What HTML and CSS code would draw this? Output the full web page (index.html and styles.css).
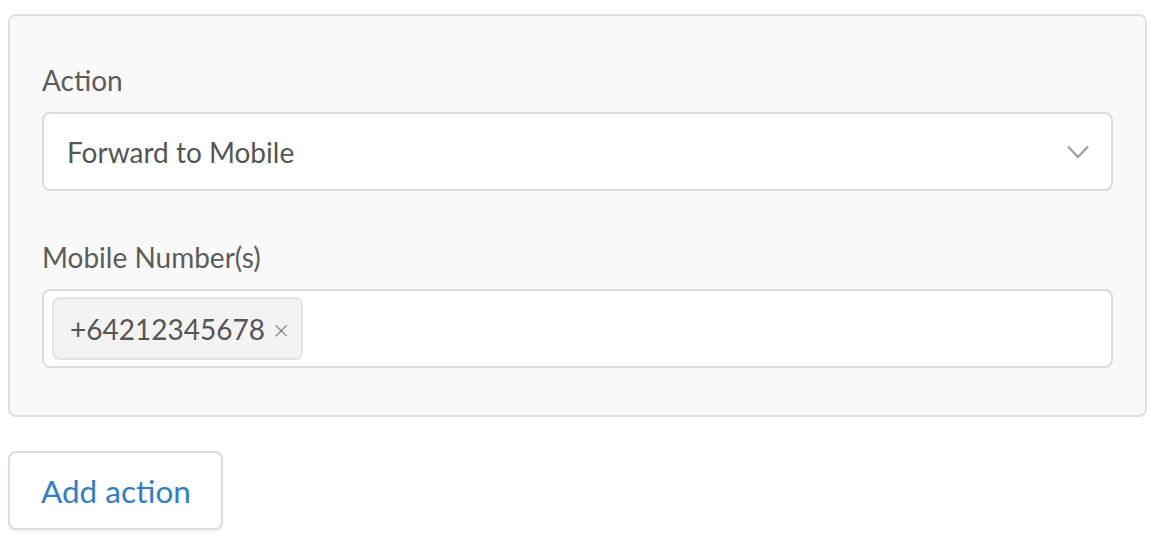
FILE: index.html
```html
<!DOCTYPE html>
<html lang="en">
<head>
  <meta charset="UTF-8" />
  <meta name="viewport" content="width=device-width, initial-scale=1" />
  <title>Actions</title>
  <link rel="stylesheet" href="styles.css">
</head>
<body>
  <div class="actions">
    <div class="action-panel">
      <div class="field">
        <label class="field-label">Action</label>
        <div class="select">
          <span>Forward to Mobile</span>
          <svg class="chevron" width="22" height="14" viewBox="0 0 22 14" aria-hidden="true">
            <path d="M1 1.5 L11 12 L21 1.5" fill="none" stroke="#9a9a9a" stroke-width="2"/>
          </svg>
        </div>
      </div>
      <div class="field">
        <label class="field-label">Mobile Number(s)</label>
        <div class="tag-input">
          <span class="tag">+64212345678 <span class="tag-remove">×</span></span>
        </div>
      </div>
    </div>
    <button class="add-btn" type="button">Add action</button>
  </div>
</body>
</html>
```

FILE: styles.css
```css
body {
  margin: 0;
  font-family: Lato, "Open Sans", sans-serif;
  color: #555;
  background: #fff;
}
.actions {
  padding: 14px 8px;
}
.action-panel {
  width: 1139px;
  box-sizing: border-box;
  background: #f9f9f9;
  border: 2px solid #e0e0e0;
  border-radius: 8px;
  padding: 47px 32px 47px;
  display: flex;
  flex-direction: column;
  gap: 49px;
}
.field {
  display: flex;
  flex-direction: column;
  gap: 15px;
}
.field-label {
  font-size: 28px;
  line-height: 34px;
  color: #5c5c5c;
}
.select {
  height: 79px;
  box-sizing: border-box;
  background: #fff;
  border: 2px solid #dcdcdc;
  border-radius: 8px;
  padding: 0 22px 0 23px;
  display: flex;
  align-items: center;
  justify-content: space-between;
  font-size: 28px;
  color: #555;
}
.tag-input {
  height: 79px;
  box-sizing: border-box;
  background: #fff;
  border: 2px solid #dcdcdc;
  border-radius: 8px;
  padding: 6px 8px;
  display: flex;
  align-items: center;
}
.tag {
  height: 63px;
  box-sizing: border-box;
  display: flex;
  align-items: center;
  gap: 8px;
  padding: 0 12px 0 16px;
  background: #f3f3f3;
  border: 2px solid #e3e3e3;
  border-radius: 8px;
  font-size: 28px;
  color: #555;
}
.tag-remove {
  font-size: 28px;
  font-weight: 300;
  color: #777;
}
.add-btn {
  margin-top: 34px;
  height: 79px;
  padding: 0 30px 0 31px;
  background: #fff;
  border: 2px solid #dcdcdc;
  border-radius: 8px;
  font-family: Lato, "Open Sans", sans-serif;
  font-size: 31.5px;
  color: #2f7ec6;
  box-shadow: 0 2px 3px rgba(0, 0, 0, 0.05);
}
```
